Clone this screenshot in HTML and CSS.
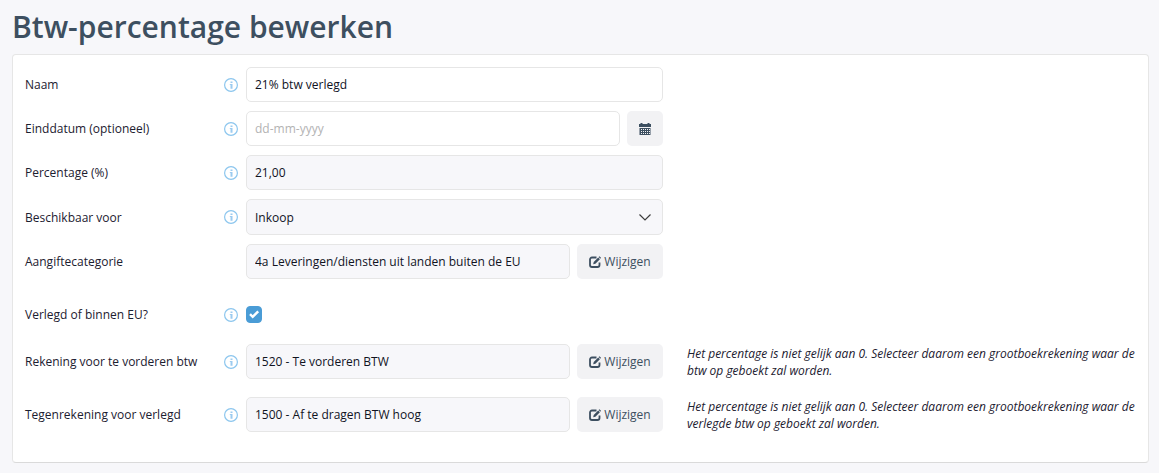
FILE: index.html
```html
<!DOCTYPE html>
<html lang="nl">
<head>
    <meta charset="UTF-8">
    <meta name="viewport" content="width=device-width, initial-scale=1.0">
    <title>Btw-percentage bewerken</title>
    <link rel="stylesheet" href="styles.css">
</head>
<body>
    <!-- Shared icons -->
    <svg class="sprite" aria-hidden="true">
        <symbol id="icon-info" viewBox="0 0 14 14">
            <circle cx="7" cy="7" r="6.4" fill="none" stroke="#8cc6ee" stroke-width="1.200" />
            <path d="M6.500 3.500h2v1.500h-2zM5.800 6h2.700v4.800H6.500V7h-.7z" fill="#9ccbf0" />
        </symbol>
        <symbol id="icon-edit" viewBox="0 0 12 12">
            <path d="M7.500 1.500H3A2 2 0 0 0 1 3.500V9a2 2 0 0 0 2 2h5.500a2 2 0 0 0 2-2V6.500" fill="none" stroke="currentColor" stroke-width="1.800" />
            <path d="M4.200 8.300l.5-2.200 4.500-4.500 1.700 1.700-4.500 4.500zM9.700 1.100l.8-.8 1.500 1.500-.7.900z" fill="currentColor" />
        </symbol>
    </svg>

    <h1>Btw-percentage bewerken</h1>

    <form class="card">
        <div class="row">
            <div class="label">
                <label for="naam">Naam</label>
                <svg class="info"><use href="#icon-info" /></svg>
            </div>
            <div class="field">
                <input type="text" id="naam" value="21% btw verlegd">
            </div>
        </div>

        <div class="row">
            <div class="label">
                <label for="einddatum">Einddatum (optioneel)</label>
                <svg class="info"><use href="#icon-info" /></svg>
            </div>
            <div class="field">
                <input type="text" id="einddatum" placeholder="dd-mm-yyyy">
                <button type="button" class="btn btn-date" aria-label="Kies datum">
                    <svg class="calendar" viewBox="0 0 12 12">
                        <path d="M0 1h1.500V0h2v1h5V0h2v1H12v3H0z" fill="currentColor" />
                        <path d="M.5 5h11v7H.5z" fill="currentColor" />
                        <path d="M2 6.500h9M2 8.500h9M2 10.500h9" fill="none" stroke="#f2f2f4" stroke-dasharray="1 1" />
                    </svg>
                </button>
            </div>
        </div>

        <div class="row">
            <div class="label">
                <label for="percentage">Percentage (%)</label>
                <svg class="info"><use href="#icon-info" /></svg>
            </div>
            <div class="field">
                <input type="text" id="percentage" value="21,00" readonly>
            </div>
        </div>

        <div class="row">
            <div class="label">
                <label for="beschikbaar">Beschikbaar voor</label>
                <svg class="info"><use href="#icon-info" /></svg>
            </div>
            <div class="field select">
                <select id="beschikbaar">
                    <option>Inkoop</option>
                    <option>Verkoop</option>
                </select>
                <svg class="chevron" viewBox="0 0 12 7">
                    <path d="M.5.5L6 6 11.500.5" fill="none" stroke="currentColor" stroke-width="1.200" />
                </svg>
            </div>
        </div>

        <div class="row">
            <div class="label">
                <label for="categorie">Aangiftecategorie</label>
            </div>
            <div class="field">
                <input type="text" id="categorie" value="4a Leveringen/diensten uit landen buiten de EU" readonly>
                <button type="button" class="btn"><svg class="edit"><use href="#icon-edit" /></svg>Wijzigen</button>
            </div>
        </div>

        <div class="row row-check">
            <div class="label">
                <label for="verlegd">Verlegd of binnen EU?</label>
                <svg class="info"><use href="#icon-info" /></svg>
            </div>
            <div class="field">
                <span class="check">
                    <input type="checkbox" id="verlegd" checked>
                    <svg viewBox="0 0 16 16"><path d="M4 8.200l2.700 2.700L12.200 5.300" fill="none" stroke="#fff" stroke-width="2.400" /></svg>
                </span>
            </div>
        </div>

        <div class="row">
            <div class="label">
                <label for="rekening">Rekening voor te vorderen btw</label>
                <svg class="info"><use href="#icon-info" /></svg>
            </div>
            <div class="field">
                <input type="text" id="rekening" value="1520 - Te vorderen BTW" readonly>
                <button type="button" class="btn"><svg class="edit"><use href="#icon-edit" /></svg>Wijzigen</button>
            </div>
            <p class="note">Het percentage is niet gelijk aan 0. Selecteer daarom een grootboekrekening waar de btw op geboekt zal worden.</p>
        </div>

        <div class="row row-spaced">
            <div class="label">
                <label for="tegenrekening">Tegenrekening voor verlegd</label>
                <svg class="info"><use href="#icon-info" /></svg>
            </div>
            <div class="field">
                <input type="text" id="tegenrekening" value="1500 - Af te dragen BTW hoog" readonly>
                <button type="button" class="btn"><svg class="edit"><use href="#icon-edit" /></svg>Wijzigen</button>
            </div>
            <p class="note">Het percentage is niet gelijk aan 0. Selecteer daarom een grootboekrekening waar de verlegde btw op geboekt zal worden.</p>
        </div>
    </form>
</body>
</html>
```
FILE: styles.css
```css
* {
    box-sizing: border-box;
}

body {
    margin: 0;
    padding: 6px 10px 10px 12px;
    background-color: #f7f7fa;
    color: #1c2030;
    font-family: "Open Sans", sans-serif;
    font-size: 12px;
    line-height: 17px;
}

.sprite {
    display: none;
}

h1 {
    margin: 0 0 6px;
    color: #3d4f60;
    font-size: 30px;
    font-weight: 600;
    line-height: 42px;
}

.card {
    display: flex;
    flex-direction: column;
    gap: 9px;
    padding: 12px 11px 30px 12px;
    background-color: #fff;
    border: 1px solid #e6e6e6;
    border-bottom-color: #dadada;
    border-radius: 4px;
}

.row {
    display: grid;
    grid-template-columns: minmax(0, 221fr) minmax(0, 417fr) minmax(0, 474fr);
    align-items: center;
}

.row-check {
    padding: 18px 0 12px;
}

.row-spaced {
    margin-top: 9px;
}

.label {
    display: flex;
    align-items: center;
    justify-content: space-between;
    padding-right: 8px;
}

.info {
    flex: none;
    width: 14px;
    height: 14px;
}

.field {
    display: flex;
    align-items: center;
    gap: 7px;
}

input[type="text"],
select {
    flex: 1;
    min-width: 0;
    height: 35px;
    padding: 0 8px;
    background-color: #fff;
    border: 1px solid #e6e6e6;
    border-radius: 5px;
    color: #10131f;
    font: inherit;
}

input[type="text"]:read-only,
select {
    background-color: #f7f7fa;
}

input::placeholder {
    color: #b3b3b3;
}

select {
    height: 36px;
    appearance: none;
}

.select {
    position: relative;
}

.chevron {
    position: absolute;
    right: 12px;
    width: 12px;
    height: 7px;
    color: #3c3c3c;
    pointer-events: none;
}

.btn {
    display: flex;
    align-items: center;
    justify-content: center;
    gap: 3px;
    width: 86px;
    height: 35px;
    padding: 0;
    background-color: #f2f2f4;
    border: none;
    border-radius: 5px;
    color: #3d4f60;
    font: inherit;
    cursor: pointer;
}

.btn:hover {
    background-color: #e8e8ec;
}

.btn-date {
    width: 36px;
}

.edit,
.calendar {
    width: 12px;
    height: 12px;
}

.check {
    position: relative;
    display: flex;
}

.check input {
    width: 16px;
    height: 17px;
    margin: 0;
    appearance: none;
    border: 1px solid #4a9cd6;
    border-radius: 4px;
}

.check input:checked {
    background-color: #4a9cd6;
}

.check svg {
    position: absolute;
    inset: 0;
    display: none;
    pointer-events: none;
}

.check input:checked + svg {
    display: block;
}

.note {
    margin: 0;
    padding-left: 24px;
    font-style: italic;
}
```
